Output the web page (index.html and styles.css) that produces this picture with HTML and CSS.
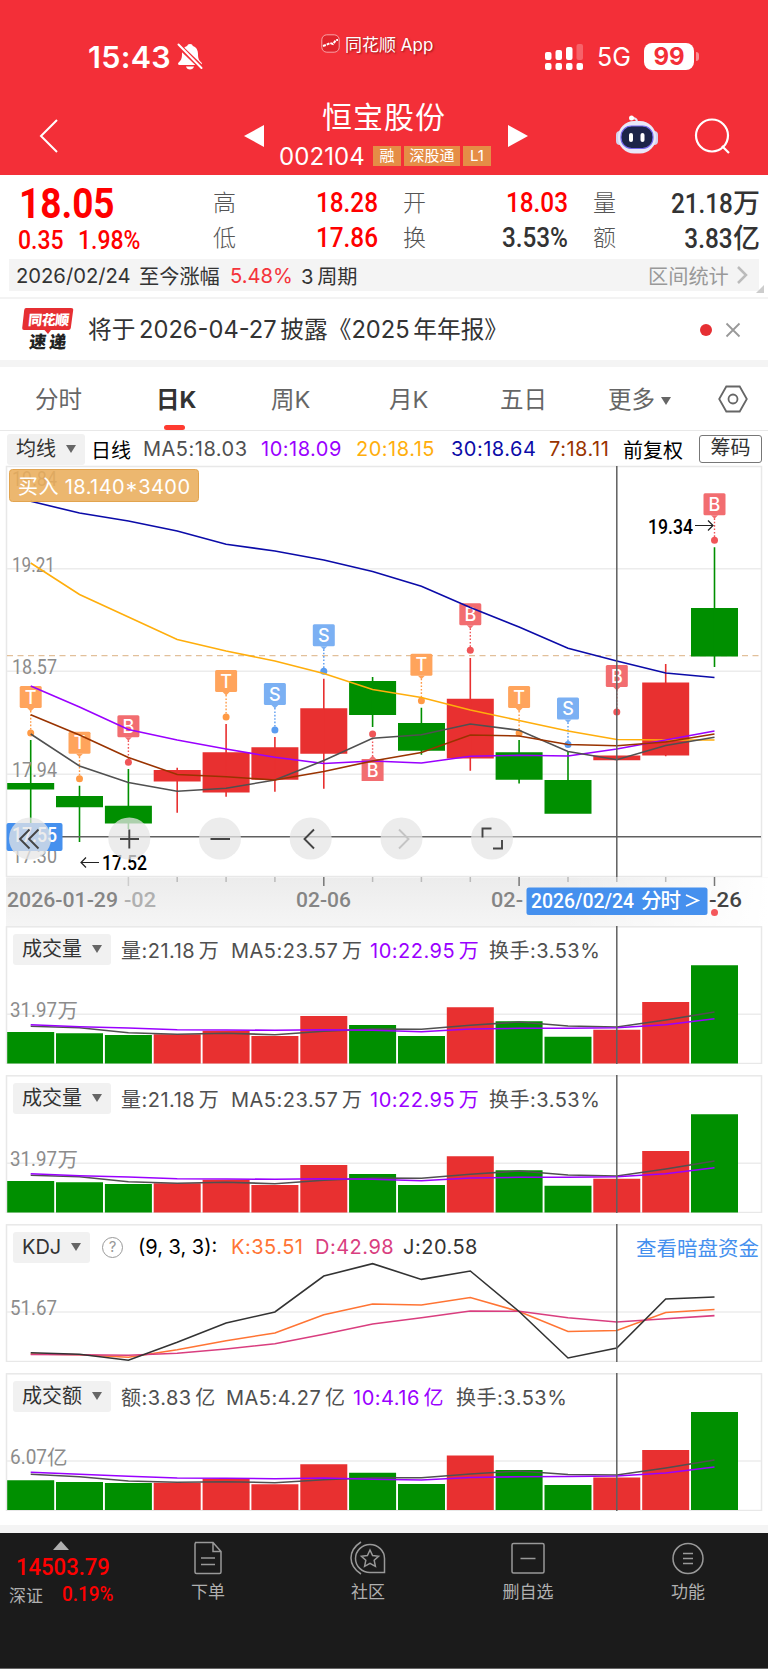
FILE: index.html
```html
<!DOCTYPE html>
<html lang="zh-CN">
  <head>
    <meta charset="UTF-8" />
    <meta name="viewport" content="width=device-width, initial-scale=1.0" />
    <title>恒宝股份 002104</title>
    <link rel="stylesheet" href="styles.css" />
  </head>
  <body>
    <header class="header">
      <div class="status-bar">
        <div class="clock">15:43</div>
        <svg class="bell" width="26" height="28" viewBox="0 0 26 28">
          <path fill="#fff" d="M13 1c-1.700 0-2.600.9-2.800 2C6.500 4.200 5 7.300 5 11c0 5-1.200 6.500-3.400 8.600C.6 20.600 1 22 2.400 22h21.200c1.400 0 1.800-1.400.8-2.400C22.200 17.500 21 16 21 11c0-3.700-1.500-6.800-5.200-8C15.600 1.900 14.700 1 13 1zM9 23.500h8c-.5 2-2 3-4 3s-3.500-1-4-3z" />
          <path stroke="#f32f38" stroke-width="5" d="M1 2l25 24" />
          <path stroke="#fff" stroke-width="2" stroke-linecap="round" d="M1.500 1.500l23 23.500" />
        </svg>
        <div class="island">
          <svg width="19" height="19" viewBox="0 0 19 19">
            <rect x=".8" y=".8" width="17.400" height="17.400" rx="5" fill="#e0242d" stroke="#f9a3a7" />
            <path d="M2 12l3-1 4-2 3 1 3-4h2" fill="none" stroke="#fff" stroke-width="2" stroke-dasharray="3 1" />
          </svg>
          <span>同花顺 App</span>
        </div>
        <svg class="signal" width="39" height="28" viewBox="0 0 39 28" fill="#fff">
          <rect x="0" y="9" width="6.500" height="8" rx="2" />
          <rect x="10.500" y="7" width="6.500" height="10" rx="2" />
          <rect x="21" y="4" width="6.500" height="13" rx="2" />
          <rect x="31.500" y="1" width="6.500" height="16" rx="2" opacity=".25" />
          <rect x="0" y="20" width="6.500" height="7" rx="2" />
          <rect x="10.500" y="20" width="6.500" height="7" rx="2" />
          <rect x="21" y="20" width="6.500" height="7" rx="2" />
          <rect x="31.500" y="20" width="6.500" height="7" rx="2" />
        </svg>
        <div class="network">5G</div>
        <div class="battery">99</div>
        <div class="battery-tip"></div>
      </div>
      <div class="nav">
        <svg class="back" width="22" height="38" viewBox="0 0 22 38">
          <path d="M19 3L3 19l16 16" fill="none" stroke="#fff" stroke-width="2" />
        </svg>
        <svg class="prev" width="20" height="22" viewBox="0 0 20 22"><path d="M20 0v22L0 11z" fill="#fff" /></svg>
        <div class="stock">
          <h1 class="stock-name">恒宝股份</h1>
          <div class="stock-code">
            <span class="code">002104</span>
            <span class="tag tag-1">融</span>
            <span class="tag tag-2">深股通</span>
            <span class="tag tag-3">L1</span>
          </div>
        </div>
        <svg class="next" width="20" height="22" viewBox="0 0 20 22"><path d="M0 0v22l20-11z" fill="#fff" /></svg>
        <svg class="robot" width="42" height="40" viewBox="0 0 42 40">
          <path d="M21 7c0-3-2-4-5-4" fill="none" stroke="#e8e4f5" stroke-width="2" />
          <circle cx="15.500" cy="3" r="2.500" fill="#fff" />
          <rect x="0" y="16" width="8" height="14" rx="4" fill="#d3d3ee" />
          <rect x="34" y="16" width="8" height="14" rx="4" fill="#d3d3ee" />
          <rect x="2" y="6" width="38" height="32.500" rx="16" fill="#e9e8f8" />
          <rect x="5" y="11" width="32" height="22.500" rx="10.500" fill="#1c2449" stroke="#7468ee" stroke-width="1.200" />
          <rect x="13" y="18" width="4" height="9" rx="2" fill="#fff" />
          <rect x="24.500" y="18" width="4" height="9" rx="2" fill="#fff" />
        </svg>
        <svg class="search" width="36" height="36" viewBox="0 0 36 36" fill="none" stroke="#fff" stroke-width="2.200">
          <circle cx="18" cy="17.500" r="16" />
          <path d="M28 28l7 7" />
        </svg>
      </div>
    </header>

    <section class="quote">
      <div class="price-box">
        <div class="price din">18.05</div>
        <div class="change"><span class="din">0.35</span><span class="din">1.98%</span></div>
      </div>
      <div class="stats">
        <span class="label">高</span><span class="value up din">18.28</span>
        <span class="label">开</span><span class="value up din">18.03</span>
        <span class="label">量</span><span class="value"><span class="din">21.18</span>万</span>
        <span class="label">低</span><span class="value up din">17.86</span>
        <span class="label">换</span><span class="value din">3.53%</span>
        <span class="label">额</span><span class="value"><span class="din">3.83</span>亿</span>
      </div>
    </section>

    <div class="range-wrap">
      <div class="range-bar">
        <span>2026/02/24</span><span>至今涨幅</span><span class="rate">5.48%</span><span>3 周期</span>
        <span class="range-link">区间统计</span>
        <svg width="12" height="18" viewBox="0 0 12 18"><path d="M2 1l8 8-8 8" fill="none" stroke="#bbb" stroke-width="2.500" /></svg>
      </div>
      <svg class="corner" width="8" height="8" viewBox="0 0 8 8"><path d="M8 0v8H0z" fill="#ccc" /></svg>
    </div>

    <section class="news">
      <svg class="news-logo" width="52" height="43" viewBox="0 0 52 43">
        <path d="M4 0h45q2.500 0 2.200 2L48.800 20q-.3 2-2.300 2H29l-3 4-3.500-4H2Q0 22 .2 20L2.200 2Q2.500 0 4 0z" fill="#e62f33" />
        <text class="logo-top" x="6" y="17" textLength="41" transform="skewX(-6) translate(1.500 0)">同花顺</text>
        <text class="logo-bottom" x="8" y="40" textLength="37" transform="skewX(-6) translate(3 0)">速递</text>
      </svg>
      <span class="news-text">将于 2026-04-27 披露《2025 年年报》</span>
      <span class="news-dot"></span>
      <svg width="16" height="16" viewBox="0 0 16 16"><path d="M1.500 1.500l13 13m0-13l-13 13" stroke="#999" stroke-width="1.800" /></svg>
    </section>

    <nav class="tabs">
      <span>分时</span>
      <span class="active">日K</span>
      <span>周K</span>
      <span>月K</span>
      <span>五日</span>
      <span class="more">更多<i class="caret"></i></span>
      <svg width="30" height="28" viewBox="0 0 30 28" fill="none" stroke="#666" stroke-width="1.800">
        <path d="M8.300 1.500h13.400L28.800 14l-7.100 12.500H8.300L1.200 14z" />
        <circle cx="15" cy="14" r="4.500" />
      </svg>
    </nav>

    <div class="ma-row">
      <span class="select">均线<i class="caret"></i></span>
      <span class="black">日线</span>
      <span class="ma5">MA5:18.03</span>
      <span class="ma10">10:18.09</span>
      <span class="ma20">20:18.15</span>
      <span class="ma30">30:18.64</span>
      <span class="ma7">7:18.11</span>
      <span class="black">前复权</span>
      <span class="chips">筹码</span>
    </div>

    <svg class="k-chart" width="768" height="461" viewBox="0 465 768 461">
      <defs>
        <linearGradient id="axisShade" x1="0" x2="0" y1="0" y2="1">
          <stop offset="0" stop-color="#ececec" />
          <stop offset="1" stop-color="#f5f5f5" />
        </linearGradient>
        <linearGradient id="axisFade" x1="0" x2="1" y1="0" y2="0">
          <stop offset="0" stop-color="#fff" stop-opacity="0" />
          <stop offset="1" stop-color="#fff" />
        </linearGradient>
        <g id="flag">
          <rect x="-11" width="22" height="22" rx="1.500" />
          <path d="M-3.500 22h7L0 25.500z" />
        </g>
        <g id="markT">
          <use href="#flag" fill="#ffa45c" />
          <path class="dots" d="M0 25v19" stroke="#ff9a45" />
          <circle cy="47" r="3.500" fill="#ff9a45" />
          <text class="mark" y="17.500">T</text>
        </g>
        <g id="markS">
          <use href="#flag" fill="#7bb0f3" />
          <path class="dots" d="M0 25v19" stroke="#5a9cf0" />
          <circle cy="47" r="3.500" fill="#5a9cf0" />
          <text class="mark" y="17.500">S</text>
        </g>
        <g id="markB">
          <use href="#flag" fill="#f26d70" />
          <path class="dots" d="M0 25v19" stroke="#f05558" />
          <circle cy="47" r="3.500" fill="#f05558" />
          <text class="mark" y="17.500">B</text>
        </g>
      </defs>

      <!-- grid -->
      <rect x="6.500" y="466.500" width="755" height="410" fill="#fff" stroke="#e8e8e8" stroke-width="1.500" />
      <path d="M7 568.700h754M7 671.300h754M7 774.300h754" stroke="#ececec" stroke-width="1.500" />
      <path d="M7 655.600h754" stroke="#e2c09a" stroke-width="1.300" stroke-dasharray="6 4.500" />

      <!-- candles -->
      <g fill="#008f00">
        <path d="M7.200 783h47v6.500h-47zM56 796h47v11.200H56zM104.900 805.700h47v17.800h-47zM349.100 681h47v34h-47zM398 723h47v27.700h-47zM495.600 752.300h47v27.400h-47zM544.500 780h47v33.700h-47zM691 608h47v48.500h-47z" />
        <path class="wick" stroke="#008f00" d="M30.700 740v88M79.500 785.700V842M128.400 769v60M372.600 677v50M421.400 707.700v47M519.100 740v43.500M568 751.700V781M714.500 547.300V667" />
      </g>
      <g fill="#e83030">
        <path d="M153.700 770h47v11.500h-47zM202.600 752.300h47v40.200h-47zM251.400 747.300h47v32.400h-47zM300.300 708.300h47v45.500h-47zM446.800 698.700h47v59.700h-47zM593.300 755.500h47v4.800h-47zM642.200 682.600h47v72.800h-47z" />
        <path class="wick" stroke="#e83030" d="M177.200 767.700v45M226.100 724v72.700M274.900 737v54.700M323.800 678.700v110M470.300 658v112.700M665.700 664v92.300" />
      </g>

      <text class="axis" x="12" y="571.700" textLength="43" lengthAdjust="spacingAndGlyphs">19.21</text>
      <text class="axis" x="12" y="486" textLength="45" lengthAdjust="spacingAndGlyphs">19.84</text>
      <text class="axis" x="12" y="673.700" textLength="45" lengthAdjust="spacingAndGlyphs">18.57</text>
      <text class="axis" x="12" y="776.500" textLength="45" lengthAdjust="spacingAndGlyphs">17.94</text>
      <text class="axis" x="12" y="862.500" textLength="45" lengthAdjust="spacingAndGlyphs">17.30</text>

      <!-- trade marks -->
      <use href="#markT" x="30.700" y="686" />
      <use href="#markT" x="79.500" y="731.700" />
      <use href="#markB" x="128.400" y="715.300" />
      <use href="#markT" x="226.100" y="670" />
      <use href="#markS" x="274.900" y="683" />
      <use href="#markS" x="323.800" y="624.300" />
      <use href="#markT" x="421.400" y="653.700" />
      <use href="#markB" x="470.300" y="603.300" />
      <use href="#markT" x="519.100" y="686" />
      <use href="#markS" x="568" y="697.500" />
      <use href="#markB" x="616.800" y="665" />
      <use href="#markB" x="714.500" y="493.300" />
      <g transform="translate(372.600 734)">
        <circle r="3.500" fill="#f05558" />
        <path class="dots" d="M0 4v18" stroke="#f05558" />
        <path d="M-11 25h7.500L0 21.500l3.500 3.500H11v22h-22z" fill="#f26d70" />
        <text class="mark" y="42.500">B</text>
      </g>

      <!-- moving averages -->
      <g class="line">
        <path stroke="#0b0ba8" d="M30.700 501.300L79.500 513l48.900 8 48.800 10 48.900 13.300 48.800 6.700 48.900 9 48.800 11.500 48.800 14.800L470.300 607.500l48.800 19.500L568 648.300 616.800 661l48.900 12 48.800 4.500" />
        <path stroke="#ffae0c" d="M30.700 563L79.500 594.500 128.400 617 177.200 639.500 226.100 651 274.900 661 323.800 673.500 372.600 689.500 421.400 697.500 470.300 710 519.100 720.500 568 731 616.800 739.500 665.700 740 714.500 740" />
        <path stroke="#9a00ff" d="M30.700 686L79.500 707 128.400 729.500 177.200 740 226.100 749 274.900 757.300 323.800 763.500 372.600 761 421.400 763 470.300 756.300 519.100 755.300 568 756 616.800 749 665.700 740 714.500 731" />
        <path stroke="#505050" d="M30.700 734L79.500 766 128.400 782.500 177.200 791.300 226.100 788.300 274.900 780 323.800 760.500 372.600 738.300 421.400 734.700 470.300 724 519.100 730.300 568 751.500 616.800 759.700 665.700 745.500 714.500 737.300" />
        <path stroke="#993300" d="M30.700 714.700L79.500 735 128.400 757.500 177.200 774.500 226.100 776.700 274.900 780 323.800 771.500 372.600 761 421.400 752.500 470.300 735 519.100 736 568 744.500 616.800 745.700 665.700 742 714.500 734" />
      </g>

      <!-- buy tag -->
      <rect x="9.500" y="469.500" width="189" height="32" rx="3" fill="#e9ad5b" fill-opacity=".88" stroke="#e2a44f" />
      <text class="tag-text" x="18" y="493.500" textLength="172">买入 18.140*3400</text>

      <!-- extremes -->
      <text class="extreme" x="648" y="533.500" textLength="45" lengthAdjust="spacingAndGlyphs">19.34</text>
      <path class="arrow" d="M695 525.500h18m-5-5l5 5-5 5" />
      <text class="extreme" x="102" y="870" textLength="45" lengthAdjust="spacingAndGlyphs">17.52</text>
      <path class="arrow" d="M99 862.500H81m5-5l-5 5 5 5" />

      <!-- time axis -->
      <rect x="6" y="877.500" width="762" height="48.500" fill="url(#axisShade)" />
      <rect x="560" y="877.500" width="208" height="48.500" fill="url(#axisFade)" />
      <path d="M177.200 877v5M226.100 877v5M274.900 877v5M372.600 877v5M421.400 877v5M470.300 877v5M568 877v5M616.800 877v5M665.700 877v5" stroke="#bbb" stroke-width="1.500" />
      <path d="M128.400 877v9" stroke="#ccc" stroke-width="1.500" />
      <path d="M323.800 877v9M519.100 877v9M714.500 877v9" stroke="#777" stroke-width="1.500" />
      <text class="axis dim" x="124" y="907" textLength="32" lengthAdjust="spacingAndGlyphs">-02</text>
      <text class="axis date" x="7" y="907" textLength="111" lengthAdjust="spacingAndGlyphs">2026-01-29</text>
      <text class="axis date" x="296" y="907" textLength="55" lengthAdjust="spacingAndGlyphs">02-06</text>
      <text class="axis date" x="491" y="907" textLength="32" lengthAdjust="spacingAndGlyphs">02-</text>
      <text class="axis dark" x="709" y="907" textLength="33" lengthAdjust="spacingAndGlyphs">-26</text>
      <circle cx="714.500" cy="912.500" r="3.500" fill="#f4575b" />

      <!-- crosshair -->
      <path class="cross" d="M616.800 466v411M62 836.700h699" />
      <rect x="6.500" y="823" width="56" height="28" rx="2" fill="#4590ee" />
      <text class="axis white" x="12" y="842" textLength="45" lengthAdjust="spacingAndGlyphs">17.55</text>
      <rect x="526.500" y="887.500" width="181" height="27.500" rx="2.500" fill="#4590ee" />
      <text class="axis white" x="531" y="907.500" textLength="103" lengthAdjust="spacingAndGlyphs">2026/02/24</text>
      <text class="axis white" x="641" y="908" textLength="40">分时</text>
      <path d="M686 895l12 5.500-12 5.500" fill="none" stroke="#fff" stroke-width="1.800" />

      <!-- chart buttons -->
      <g fill="#e6e6e6" fill-opacity=".75">
        <circle cx="30" cy="838.500" r="21" />
        <circle cx="129.300" cy="838.500" r="21" />
        <circle cx="220" cy="838.500" r="21" />
        <circle cx="310.700" cy="838.500" r="21" />
        <circle cx="401.500" cy="838.500" r="21" />
        <circle cx="492" cy="838.500" r="21" />
      </g>
      <g class="btn-icon">
        <path d="M29.500 829.500L20 839l9.500 9.500M38.500 829.500L29 839l9.500 9.500" />
        <path d="M120 839h19M129.300 829.500v19M210.500 839H230" />
        <path d="M314 829.500l-9.500 9.500 9.500 9.500M482.500 837.500v-9h9M502 840v8.500h-9" />
        <path d="M399 829.500l9.500 9.500-9.500 9.500" stroke="#c4c4c4" />
      </g>
    </svg>

    <section class="panel">
      <svg width="768" height="138" viewBox="0 0 768 138">
        <g id="volume">
          <rect class="frame" x="6.500" y=".8" width="755" height="136.700" />
          <path class="grid" d="M7 88.300h754" />
          <text class="axis" x="10" y="91" textLength="47" lengthAdjust="spacingAndGlyphs">31.97</text>
          <text class="axis" x="57.500" y="91.500">万</text>
          <path fill="#008f00" d="M7.200 137.500V106h47v31.500zM56 137.500v-30.200h47v30.200zM104.900 137.500V109h47v28.500zM349.100 137.500V99h47v38.500zM398 137.500V110h47v27.500zM495.600 137.500V95.300h47v42.200zM544.500 137.500v-26.800h47v26.800zM691 137.500V39.300h47v98.200z" />
          <path fill="#e83030" d="M153.700 137.500v-29.200h47v29.200zM202.600 137.500v-32.800h47v32.800zM251.400 137.500V110h47v27.500zM300.300 137.500V90h47v47.500zM446.800 137.500V81.300h47v56.200zM593.300 137.500v-33.800h47v33.800zM642.200 137.500V76h47v61.500z" />
          <g class="line">
            <path stroke="#505050" d="M30.700 100.300L79.500 101.700 128.400 106.700 177.200 108.300 226.100 107.300 274.900 108.700 323.800 105.300 372.600 103 421.400 103.300 470.300 99.300 519.100 96 568 100 616.800 101 665.700 94 714.500 86" />
            <path stroke="#9a00ff" d="M30.700 98.700L79.500 100.700 128.400 102 177.200 103.700 226.100 104 274.900 104.300 323.800 103.700 372.600 104.300 421.400 105.700 470.300 103 519.100 102.300 568 102.300 616.800 101.700 665.700 98.700 714.500 92.700" />
          </g>
          <path class="cross" d="M616.800 0v138" />
        </g>
      </svg>
      <div class="panel-head vol-head">
        <span class="select">成交量<i class="caret"></i></span>
        <span class="ma5">量:21.18 万</span>
        <span class="ma5">MA5:23.57 万</span>
        <span class="ma10">10:22.95 万</span>
        <span class="ma5">换手:3.53%</span>
      </div>
    </section>

    <section class="panel">
      <svg width="768" height="138" viewBox="0 0 768 138"><use href="#volume" /></svg>
      <div class="panel-head vol-head">
        <span class="select">成交量<i class="caret"></i></span>
        <span class="ma5">量:21.18 万</span>
        <span class="ma5">MA5:23.57 万</span>
        <span class="ma10">10:22.95 万</span>
        <span class="ma5">换手:3.53%</span>
      </div>
    </section>

    <section class="panel">
      <svg width="768" height="138" viewBox="0 0 768 138">
        <rect class="frame" x="6.500" y=".8" width="755" height="136.700" />
        <path class="grid" d="M7 88h754" />
        <text class="axis" x="10" y="91" textLength="47" lengthAdjust="spacingAndGlyphs">51.67</text>
        <g class="line">
          <path stroke="#ff7434" d="M30.700 130L79.500 130.700 128.400 133.300 177.200 125.700 226.100 116.700 274.900 109 323.800 90.700 372.600 80 421.400 81 470.300 73.500 519.100 87.500 568 107.500 616.800 106.500 665.700 88.500 714.500 85.500" />
          <path stroke="#d93e7f" d="M30.700 130.500L79.500 130.700 128.400 131.300 177.200 129.300 226.100 125 274.900 119.700 323.800 110.300 372.600 100 421.400 93.700 470.300 87 519.100 87.300 568 93.700 616.800 98 665.700 94.800 714.500 91.600" />
          <path stroke="#333" d="M30.700 128.700L79.500 130.300 128.400 136.300 177.200 118.300 226.100 99 274.900 88 323.800 52 372.600 39.700 421.400 55.400 470.300 47 519.100 87.500 568 134 616.800 124 665.700 75 714.500 73" />
        </g>
        <path class="cross" d="M616.800 0v138" />
      </svg>
      <div class="panel-head kdj-head">
        <span class="select">KDJ<i class="caret"></i></span>
        <span class="help">?</span>
        <span class="black">(9, 3, 3):</span>
        <span class="k">K:35.51</span>
        <span class="d">D:42.98</span>
        <span class="j">J:20.58</span>
        <span class="fund-link">查看暗盘资金</span>
      </div>
    </section>

    <section class="panel">
      <svg width="768" height="138" viewBox="0 0 768 138">
        <rect class="frame" x="6.500" y=".8" width="755" height="136.700" />
        <path class="grid" d="M7 88h754" />
        <text class="axis" x="10" y="91" textLength="37" lengthAdjust="spacingAndGlyphs">6.07</text>
        <text class="axis" x="47" y="91.500">亿</text>
        <path fill="#008f00" d="M7.200 137v-29.700h47V137zM56 137v-28h47v28zM104.900 137v-27h47v27zM349.100 137V99.700h47V137zM398 137v-26h47v26zM495.600 137V97h47v40zM544.500 137v-25h47v25zM691 137V39h47v98z" />
        <path fill="#e83030" d="M153.700 137v-27.300h47V137zM202.600 137v-31.300h47V137zM251.400 137v-25.700h47V137zM300.300 137V91.300h47V137zM446.800 137V82.600h47V137zM593.300 137v-32.500h47V137zM642.200 137V77h47v60z" />
        <g class="line">
          <path stroke="#505050" d="M30.700 101.300L79.500 103.700 128.400 108 177.200 109.300 226.100 108.700 274.900 109.700 323.800 106.700 372.600 104.700 421.400 104.700 470.300 101 519.100 98 568 101.500 616.800 102 665.700 95 714.500 87" />
          <path stroke="#9a00ff" d="M30.700 99.300L79.500 101.300 128.400 103.300 177.200 105 226.100 105.300 274.900 105.700 323.800 105 372.600 106.300 421.400 107 470.300 104.500 519.100 103.700 568 103.500 616.800 103 665.700 100 714.500 94" />
        </g>
        <path class="cross" d="M616.800 0v138" />
      </svg>
      <div class="panel-head amount-head">
        <span class="select">成交额<i class="caret"></i></span>
        <span class="ma5">额:3.83 亿</span>
        <span class="ma5">MA5:4.27 亿</span>
        <span class="ma10">10:4.16 亿</span>
        <span class="ma5">换手:3.53%</span>
      </div>
    </section>

    <footer class="footer">
      <div class="index">
        <i class="index-arrow"></i>
        <div class="index-value din">14503.79</div>
        <div class="index-name"><span>深证</span><span class="index-rate din">0.19%</span></div>
      </div>
      <div class="menu">
        <svg width="32" height="34" viewBox="0 0 32 34">
          <path d="M3 1.500h18l8 9V31q0 1.500-1.500 1.500h-23Q3 32.500 3 31V3q0-1.500 1.500-1.500M21 1.500v9h8M9 17h14M9 23.500h14" />
        </svg>
        <span>下单</span>
      </div>
      <div class="menu">
        <svg width="38" height="34" viewBox="0 0 38 34">
          <path d="M35.500 31.500V17.500a14.500 14 0 1 0-14.500 14zM12 1Q2 7.500 2 17t10 16" />
          <path d="M21 9l2.600 5.500 6 .7-4.400 4.100 1.200 6-5.400-3-5.400 3 1.200-6-4.400-4.100 6-.7z" />
        </svg>
        <span>社区</span>
      </div>
      <div class="menu">
        <svg width="34" height="34" viewBox="0 0 34 34">
          <rect x="1" y="2.500" width="32" height="29.500" rx="1.500" />
          <path d="M9.500 17.500h15" />
        </svg>
        <span>删自选</span>
      </div>
      <div class="menu">
        <svg width="32" height="34" viewBox="0 0 32 34">
          <circle cx="16" cy="17.500" r="15" />
          <path d="M11 12.500h10M11 17.500h10M11 22.500h10" />
        </svg>
        <span>功能</span>
      </div>
    </footer>
  </body>
</html>
```

FILE: styles.css
```css
* {
  box-sizing: border-box;
}

body {
  margin: 0;
  width: 768px;
  height: 1669px;
  overflow: hidden;
  background: #fff;
  color: #333;
  font-family: Inter, "Noto Sans CJK SC", sans-serif;
  font-size: 20px;
  white-space: nowrap;
}

svg {
  display: block;
  flex: none;
}

i {
  font-style: normal;
}

/* narrow figures used for prices */
.din {
  display: inline-block;
  font-family: Roboto, sans-serif;
  font-weight: 500;
  transform: scaleX(0.9);
  transform-origin: left center;
}

/* header */
.header {
  height: 175px;
  background: #f32f38;
  color: #fff;
}

.status-bar {
  display: flex;
  align-items: center;
  height: 87px;
  padding: 26px 0 0 88px;
}

.clock {
  width: 89px;
  font-size: 30.5px;
  font-weight: 600;
  letter-spacing: 0.3px;
}

.island {
  display: flex;
  align-items: center;
  width: 224px;
  margin-left: 118px;
  margin-bottom: 26px;
  gap: 5px;
  font-size: 17px;
  text-shadow: 1px 1px 2px rgba(90, 0, 0, 0.6);
}

.network {
  width: 46px;
  margin-left: 13px;
  font-size: 25px;
}

.battery {
  width: 50px;
  height: 27px;
  margin-left: 1px;
  border-radius: 8px;
  background: #fff;
  color: #f32f38;
  font-size: 24px;
  font-weight: 700;
  line-height: 27px;
  text-align: center;
}

.battery-tip {
  width: 3px;
  height: 9px;
  margin-left: 2px;
  border-radius: 0 4px 4px 0;
  background: #f98f94;
}

.nav {
  display: flex;
  height: 88px;
  padding-left: 38px;
}

.back {
  margin-top: 30px;
}

.prev {
  margin: 38px 0 0 184px;
}

.stock {
  width: 228px;
  margin-left: 15px;
}

.stock-name {
  height: 52px;
  margin: 0 0 0 43px;
  font-size: 30px;
  font-weight: 400;
  line-height: 61px;
  letter-spacing: 1px;
}

.stock-code {
  display: flex;
  align-items: center;
  height: 34px;
}

.code {
  width: 94px;
  font-size: 24px;
  letter-spacing: 0.1px;
}

.tag {
  height: 20px;
  margin-right: 3px;
  background: #e58d46;
  font-size: 15px;
  line-height: 20px;
  text-align: center;
}

.tag-1 {
  width: 28px;
}

.tag-2 {
  width: 56px;
}

.tag-3 {
  width: 28px;
}

.next {
  margin: 38px 0 0 1px;
}

.robot {
  margin: 28px 0 0 88px;
}

.search {
  margin: 31px 0 0 36px;
}

/* quote */
.quote {
  display: flex;
  height: 84px;
}

.price-box {
  width: 213px;
  padding: 4px 0 0 18px;
  color: #f00;
}

.price {
  height: 48px;
  margin-left: 1px;
  font-size: 42px;
  font-weight: 700;
  line-height: 50px;
}

.price.din {
  transform: scaleX(0.88);
}

.change {
  display: flex;
  gap: 9px;
  font-size: 25.5px;
  line-height: 27px;
}

.stats {
  display: grid;
  grid-template-columns: 26px 139px 52px 138px 53px 139px;
  grid-template-rows: 35px 35px;
  align-items: center;
  padding-top: 11px;
}

.label {
  padding-left: 25px;
  color: #555;
  font-size: 23px;
  font-weight: 300;
  line-height: 35px;
}

.label:nth-child(6n + 1) {
  padding-left: 0;
}

.value {
  font-size: 27px;
  font-weight: 500;
  line-height: 35px;
  text-align: right;
}

.value.din,
.value .din {
  transform-origin: right center;
}

.up {
  color: #f00;
}

.range-wrap {
  display: flex;
  align-items: flex-end;
  height: 40px;
  padding: 0 4px 5px 9px;
  border-bottom: 2px solid #f3f3f3;
}

.range-bar {
  display: grid;
  grid-template-columns: 123px 91px 71px 347px 88px 12px;
  align-items: center;
  width: 750px;
  height: 32px;
  margin-bottom: 1px;
  padding-left: 7px;
  background: #f4f4f4;
  font-size: 20.2px;
  word-spacing: -2px;
}

.rate {
  color: #f5333b;
}

.range-link {
  color: #999;
}

.corner {
  margin: 0 0 -1px -3px;
}

/* news */
.news {
  display: flex;
  align-items: center;
  height: 68px;
  padding-left: 22px;
  border-bottom: 7px solid #f4f4f4;
}

.logo-top {
  fill: #fff;
  font-size: 14px;
  font-weight: 900;
}

.logo-bottom {
  fill: #222;
  font-size: 17px;
  font-weight: 900;
}

.news-text {
  width: 626px;
  padding: 0 0 4px 14px;
  font-size: 23.7px;
  word-spacing: -3px;
}

.news-dot {
  width: 12px;
  height: 12px;
  margin-right: 13px;
  border-radius: 50%;
  background: #e62f33;
}

/* tabs */
.tabs {
  display: grid;
  grid-template-columns: 121px 115px 118px 111px 108px 110px 30px;
  align-items: center;
  height: 64px;
  padding-left: 35px;
  border-bottom: 1px solid #e8e8e8;
  color: #666;
  font-size: 23.5px;
}

.tabs span {
  height: 63px;
  line-height: 65px;
}

.tabs .active {
  width: 40px;
  color: #333;
  font-weight: 700;
}

.active::after {
  content: "";
  display: block;
  width: 21px;
  height: 5px;
  margin: -7px 0 0 8px;
  border-radius: 3px;
  background: #ff3b30;
}

.caret {
  display: inline-block;
  margin-left: 10px;
  vertical-align: 3px;
  border: 5.5px solid transparent;
  border-top: 8px solid #666;
  border-bottom: 0;
}

.more .caret {
  margin-left: 6px;
}

/* indicator values */
.ma-row {
  display: grid;
  grid-template-columns: 84px 52px 118px 95px 95px 98px 74px 76px 63px;
  align-items: center;
  height: 34px;
  padding: 2px 0 0 7px;
}

.select {
  justify-self: start;
  height: 31px;
  padding: 0 9px;
  border-radius: 3px;
  background: #f1f1f1;
  line-height: 30px;
}

.black {
  color: #000;
}

.ma5,
.ma10,
.ma20,
.ma30,
.ma7,
.k,
.d,
.j {
  letter-spacing: 0.5px;
  word-spacing: -2.5px;
}

.ma5 {
  color: #505050;
}

.ma10 {
  color: #9a00ff;
}

.ma20 {
  color: #ffae0c;
}

.ma30 {
  color: #0b0ba8;
}

.ma7 {
  color: #993300;
}

.chips {
  height: 28px;
  border: 1px solid #777;
  border-radius: 3px;
  line-height: 25px;
  text-align: center;
}

/* charts */
.axis {
  fill: #8c8c8c;
  font-family: Roboto, "Noto Sans CJK SC", sans-serif;
  font-size: 20.5px;
}

.date {
  fill: #858585;
  font-weight: 500;
}

.dim {
  fill: #b0b0b0;
  font-weight: 500;
}

.dark {
  fill: #444;
  font-weight: 500;
}

.white {
  fill: #fff;
  font-weight: 500;
}

.extreme {
  fill: #000;
  font-family: Roboto, sans-serif;
  font-size: 20.5px;
  font-weight: 500;
}

.mark {
  fill: #fff;
  font-size: 18px;
  font-weight: 500;
  text-anchor: middle;
}

.tag-text {
  fill: #fff;
}

.wick {
  stroke-width: 1.6;
}

.dots {
  stroke-width: 1.4;
  stroke-dasharray: 1.6 1.8;
}

.line {
  fill: none;
  stroke-width: 1.6;
}

.arrow {
  fill: none;
  stroke: #222;
  stroke-width: 1.2;
}

.cross {
  fill: none;
  stroke: #606060;
  stroke-width: 1.5;
}

.btn-icon {
  fill: none;
  stroke: #444;
  stroke-width: 1.9;
}

.frame {
  fill: none;
  stroke: #e8e8e8;
  stroke-width: 1.5;
}

.grid {
  stroke: #ececec;
  stroke-width: 1.5;
}

.panel {
  display: grid;
  height: 138px;
  margin-bottom: 11px;
}

.panel > svg,
.panel-head {
  grid-area: 1 / 1;
}

.panel-head {
  display: grid;
  align-items: center;
  height: 32px;
  margin-top: 7px;
  padding-left: 13px;
}

.vol-head {
  grid-template-columns: 108px 110px 139px 119px 120px;
}

.amount-head {
  grid-template-columns: 108px 105px 127px 103px 120px;
}

.kdj-head {
  grid-template-columns: 89px 36px 93px 84px 88px 233px 125px;
}

.help {
  width: 21px;
  height: 21px;
  border: 1.5px solid #999;
  border-radius: 50%;
  color: #999;
  font-size: 15px;
  line-height: 18px;
  text-align: center;
}

.k {
  color: #ff7434;
}

.d {
  color: #d93e7f;
}

.fund-link {
  color: #4590ee;
  font-size: 20.5px;
}

/* footer */
.footer {
  display: flex;
  height: 144px;
  margin-top: 14px;
  border-top: 8px solid #f4f4f4;
  background: #1b1b1b;
  box-shadow: inset 0 -1px #666;
  color: #b0b0b0;
  font-size: 17px;
}

.index {
  width: 128px;
  color: #f00;
}

.index-arrow {
  display: block;
  margin: 8px 0 0 53px;
  width: 0;
  border: 8px solid transparent;
  border-top: 0;
  border-bottom: 9px solid #b0b0b0;
}

.index-value {
  margin: 4px 0 0 16px;
  font-size: 24.5px;
  line-height: 26px;
}

.index-name {
  display: flex;
  align-items: center;
  height: 28px;
  padding-left: 9px;
  color: #b0b0b0;
}

.index-rate {
  margin-left: 19px;
  color: #f00;
  font-size: 21px;
}

.menu {
  display: flex;
  flex-direction: column;
  align-items: center;
  width: 160px;
  padding-top: 8px;
}

.menu svg {
  fill: none;
  stroke: #999;
  stroke-width: 1.5;
}

.menu span {
  margin-top: 4px;
  line-height: 26px;
}
```
